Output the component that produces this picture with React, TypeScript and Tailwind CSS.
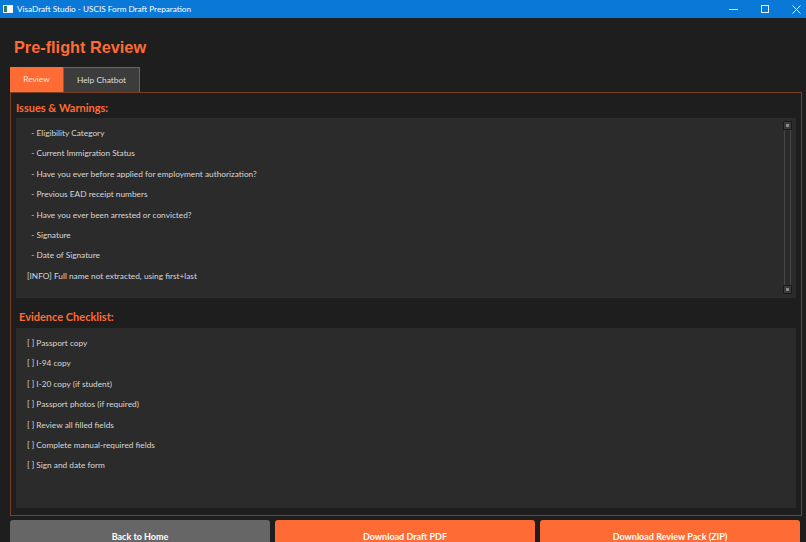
import React from 'react';

const issues = [
  '  - Eligibility Category',
  '  - Current Immigration Status',
  '  - Have you ever before applied for employment authorization?',
  '  - Previous EAD receipt numbers',
  '  - Have you ever been arrested or convicted?',
  '  - Signature',
  '  - Date of Signature',
  '[INFO] Full name not extracted, using first+last',
];

const checklist = [
  '[ ] Passport copy',
  '[ ] I-94 copy',
  '[ ] I-20 copy (if student)',
  '[ ] Passport photos (if required)',
  '[ ] Review all filled fields',
  '[ ] Complete manual-required fields',
  '[ ] Sign and date form',
];

function TitleBar() {
  return (
    <div className="h-[18px] bg-[#0a78d7] flex items-center text-white text-[8.2px] shrink-0">
      <svg width="10" height="8" viewBox="0 0 10 8" className="ml-[3px] mr-[4px]">
        <rect x="0" y="0" width="10" height="8" fill="#e8f0f8" />
        <rect x="1" y="1" width="3" height="6" fill="#3a7a5a" />
        <rect x="5" y="1" width="4" height="6" fill="#ffffff" />
      </svg>
      <span>VisaDraft Studio - USCIS Form Draft Preparation</span>
      <div className="ml-auto flex items-center gap-[23px] pr-[5px] h-full">
        <div className="w-[9px] h-px bg-white/80" />
        <div className="w-[8px] h-[8px] border border-white/90" />
        <svg width="9" height="9" viewBox="0 0 9 9">
          <path d="M0.5 0.5 L8.5 8.5 M8.5 0.5 L0.5 8.5" stroke="white" strokeWidth="1" />
        </svg>
      </div>
    </div>
  );
}

function ScrollBar() {
  return (
    <div className="absolute right-[4px] top-[3px] bottom-[4px] w-[9px] flex flex-col items-center">
      <div className="w-[9px] h-[9px] bg-[#3a3a3a] border border-[#1a1a1a] flex items-center justify-center">
        <div className="w-[3px] h-[3px] bg-[#8a8a8a]" />
      </div>
      <div className="flex-1 w-[7px] border-x border-[#474747] bg-[#2a2a2a]" />
      <div className="w-[9px] h-[9px] bg-[#3a3a3a] border border-[#1a1a1a] flex items-center justify-center">
        <div className="w-[3px] h-[3px] bg-[#8a8a8a]" />
      </div>
    </div>
  );
}

function TextBox({ lines, scroll }: { lines: string[]; scroll?: boolean }) {
  return (
    <div className="relative h-[180px] shrink-0 bg-[#2b2b2b] pl-[11px] pt-[10px]">
      {lines.map((l) => (
        <div key={l} className="h-[20.4px] text-[8.3px] leading-[11px] text-[#d8d8d8] whitespace-pre">
          {l}
        </div>
      ))}
      {scroll && <ScrollBar />}
    </div>
  );
}

export default function App() {
  return (
    <div
      className="w-[806px] h-[542px] bg-[#1e1e1e] flex flex-col overflow-hidden"
      style={{ fontFamily: 'Lato, "Open Sans", sans-serif' }}
    >
      <TitleBar />
      <div className="flex flex-col px-[10px] shrink-0">
        <h1
          className="shrink-0 mt-[18px] ml-[4px] h-[23px] text-[16.3px] leading-[23px] font-bold text-[#ff6b35]"
          style={{ fontFamily: '"Liberation Sans", Arial, sans-serif' }}
        >
          Pre-flight Review
        </h1>
        <div className="shrink-0 mt-[8px] flex h-[25px]">
          <div className="w-[53px] bg-[#ff6b35] text-[#f6e2d8] text-[8.4px] flex items-center justify-center">
            Review
          </div>
          <div className="w-[77px] bg-[#3c3c3c] border border-b-0 border-[#a0522d] text-[#dcdcdc] text-[8.4px] flex items-center justify-center">
            Help Chatbot
          </div>
        </div>
        <div className="shrink-0 w-[792px] h-[424px] border border-[#7a3f25] px-[5px] flex flex-col">
          <div className="shrink-0 h-[25px] pt-[8px] text-[11px] leading-[13px] font-bold text-[#ff6b35]">
            Issues &amp; Warnings:
          </div>
          <TextBox lines={issues} scroll />
          <div className="shrink-0 h-[30px] pt-[12px] pl-[3px] text-[11px] leading-[13px] font-bold text-[#ff6b35]">
            Evidence Checklist:
          </div>
          <TextBox lines={checklist} />
        </div>
        <div className="shrink-0 mt-[4px] grid grid-cols-3 gap-[5px] w-[790px]">
          <button className="h-[32px] rounded-t-[3px] bg-[#666666] text-white text-[9px] font-bold pt-[1px] flex justify-center items-center">
            Back to Home
          </button>
          <button className="h-[32px] rounded-t-[3px] bg-[#ff6b35] text-white text-[9px] font-bold pt-[1px] flex justify-center items-center">
            Download Draft PDF
          </button>
          <button className="h-[32px] rounded-t-[3px] bg-[#ff6b35] text-white text-[9px] font-bold pt-[1px] flex justify-center items-center">
            Download Review Pack (ZIP)
          </button>
        </div>
      </div>
    </div>
  );
}
